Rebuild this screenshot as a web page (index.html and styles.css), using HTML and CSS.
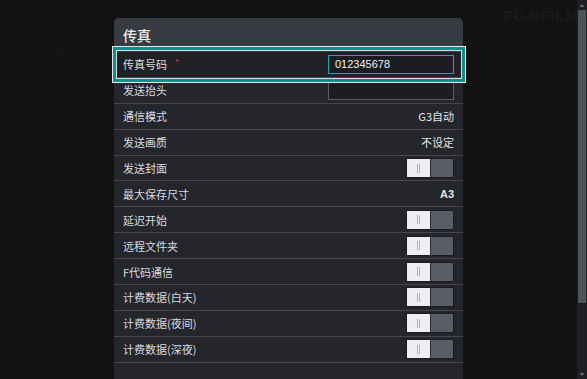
FILE: index.html
```html
<!DOCTYPE html>
<html lang="zh-CN">
<head>
    <meta charset="UTF-8">
    <meta name="viewport" content="width=device-width, initial-scale=1.0">
    <title>传真</title>
    <link rel="stylesheet" href="styles.css">
</head>
<body>
    <div id="screen">
        <div id="backdrop">
            <div class="bg-top">
                <span class="bg-logo">FUJIFILM</span>
            </div>
            <div class="bg-line">
                <span>简易模式</span>
                <span class="bg-right">Standard Print</span>
            </div>
        </div>

        <div id="dialog">
            <div class="dialog-title">传真</div>
            <div class="rows">
                <div class="row focused">
                    <span class="label">传真号码<span class="req">*</span></span>
                    <div class="input active">012345678</div>
                </div>
                <div class="row">
                    <span class="label">发送抬头</span>
                    <div class="input"></div>
                </div>
                <div class="row">
                    <span class="label">通信模式</span>
                    <span class="value">G3自动</span>
                </div>
                <div class="row">
                    <span class="label">发送画质</span>
                    <span class="value">不设定</span>
                </div>
                <div class="row">
                    <span class="label">发送封面</span>
                    <div class="toggle"><span class="knob"></span></div>
                </div>
                <div class="row">
                    <span class="label">最大保存尺寸</span>
                    <span class="value bold">A3</span>
                </div>
                <div class="row">
                    <span class="label">延迟开始</span>
                    <div class="toggle"><span class="knob"></span></div>
                </div>
                <div class="row">
                    <span class="label">远程文件夹</span>
                    <div class="toggle"><span class="knob"></span></div>
                </div>
                <div class="row">
                    <span class="label">F代码通信</span>
                    <div class="toggle"><span class="knob"></span></div>
                </div>
                <div class="row">
                    <span class="label">计费数据(白天)</span>
                    <div class="toggle"><span class="knob"></span></div>
                </div>
                <div class="row">
                    <span class="label">计费数据(夜间)</span>
                    <div class="toggle"><span class="knob"></span></div>
                </div>
                <div class="row">
                    <span class="label">计费数据(深夜)</span>
                    <div class="toggle"><span class="knob"></span></div>
                </div>
            </div>
        </div>
    </div>
    <div id="scrollbar">
        <div class="sb-arrow up"></div>
        <div class="sb-thumb"></div>
        <div class="sb-track"></div>
        <div class="sb-arrow down"></div>
    </div>
</body>
</html>
```

FILE: styles.css
```css
html {
    margin: 0;
    padding: 0;
    height: 100%;
    overflow: hidden;
    background-color: #121212;
}
body {
    margin: 0;
    padding: 0;
    width: 100%;
    height: 100%;
    display: flex;
    font-family: 'Noto Sans CJK SC', 'Noto Sans', sans-serif;
}
#screen {
    flex-grow: 1;
    position: relative;
}
#backdrop {
    color: #161617;
    font-size: 12px;
}
.bg-top {
    display: flex;
    justify-content: flex-end;
    height: 30px;
    align-items: center;
}
.bg-logo {
    font-family: 'Liberation Sans', sans-serif;
    font-weight: 700;
    font-size: 15px;
    letter-spacing: 1px;
    margin-right: -2px;
    color: #1a1a1b;
}
.bg-line {
    display: flex;
    justify-content: space-between;
    padding: 16px 20px 0 30px;
    white-space: nowrap;
}

#dialog {
    position: absolute;
    top: 18px;
    left: 114px;
    width: 349px;
    bottom: 0;
    background-color: #25262b;
    border-radius: 5px 5px 0 0;
}
.dialog-title {
    height: 34px;
    box-sizing: border-box;
    padding: 7px 0 0 9px;
    background-color: #383b42;
    border-radius: 5px 5px 0 0;
    color: #eceef2;
    font-size: 14px;
    font-weight: 500;
    line-height: 20px;
}
.row {
    display: flex;
    align-items: center;
    justify-content: space-between;
    height: 24.9px;
    padding: 0 9px;
    border-bottom: 1px solid #45474d;
    color: #d9dbe0;
    font-size: 11px;
}
.row.focused {
    position: relative;
    background-color: #202125;
}
.row.focused::after {
    content: "";
    position: absolute;
    top: -6px;
    bottom: -6px;
    left: -2px;
    right: -3px;
    border: 1px solid #e6e8ea;
    box-shadow: inset 0 0 0 3px #0f8f8c, inset 0 0 0 4px #d6dadc;
}
.req {
    color: #d2403f;
    font-size: 9px;
    margin-left: 8px;
    position: relative;
    top: -3px;
}
.input {
    width: 126px;
    height: 19px;
    box-sizing: border-box;
    border: 1px solid #5b5e66;
    background-color: #1c1d21;
    color: #f2f2f2;
    font-family: 'Liberation Sans', sans-serif;
    font-size: 11px;
    line-height: 17px;
    padding-left: 6px;
}
.input.active {
    border-color: #1ba7b6;
}
.value {
    color: #e3e4e8;
}
.value.bold {
    font-family: 'Liberation Sans', sans-serif;
    font-weight: 700;
}
.toggle {
    width: 48px;
    height: 20px;
    box-sizing: border-box;
    border: 1px solid #1b1c20;
    background-color: #585c66;
    display: flex;
}
.knob {
    width: 23px;
    height: 100%;
    background-color: #eceef3;
    border-right: 1px solid #2d2f34;
    display: flex;
    justify-content: center;
    align-items: center;
}
.knob::before {
    content: "";
    width: 1px;
    height: 9px;
    border-left: 1px solid #aeb2bb;
    border-right: 1px solid #aeb2bb;
}

#scrollbar {
    width: 10px;
    flex-shrink: 0;
    background-color: #1e1f23;
    display: flex;
    flex-direction: column;
}
.sb-arrow {
    height: 10px;
    display: flex;
    justify-content: center;
    align-items: center;
}
.sb-arrow::before {
    content: "";
    border-left: 3px solid transparent;
    border-right: 3px solid transparent;
}
.sb-arrow.up::before {
    border-bottom: 3px solid #5d616a;
}
.sb-arrow.down::before {
    border-top: 3px solid #5d616a;
}
.sb-thumb {
    height: 293px;
    margin: 0 1px;
    background-color: #4e535d;
}
.sb-track {
    flex-grow: 1;
}
```
